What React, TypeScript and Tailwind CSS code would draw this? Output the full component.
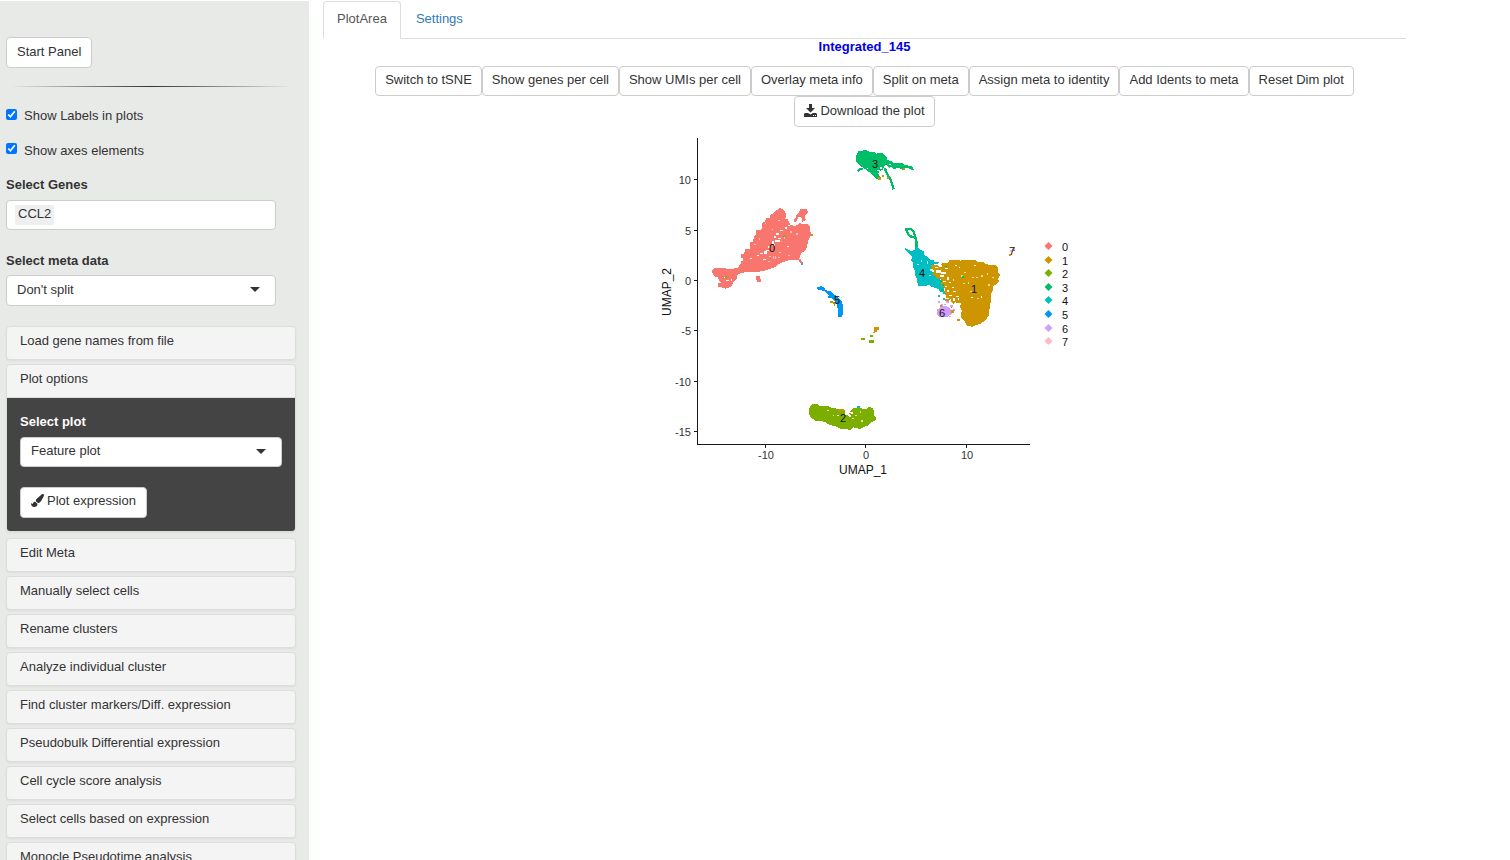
import React, { useState } from 'react';
import { FaPaintBrush } from 'react-icons/fa';

const plotButtons = [
  'Switch to tSNE',
  'Show genes per cell',
  'Show UMIs per cell',
  'Overlay meta info',
  'Split on meta',
  'Assign meta to identity',
  'Add Idents to meta',
  'Reset Dim plot',
];

const sections = [
  'Edit Meta',
  'Manually select cells',
  'Rename clusters',
  'Analyze individual cluster',
  'Find cluster markers/Diff. expression',
  'Pseudobulk Differential expression',
  'Cell cycle score analysis',
  'Select cells based on expression',
  'Monocle Pseudotime analysis',
];

const colors = ['#f8766d', '#cd9600', '#7cae00', '#00be67', '#00bfc4', '#0096f5', '#d39cff', '#ffb8c4'];
const legendY = [246, 260, 273, 287, 300, 314, 328, 341];

const yTicks = [
  { label: '10', y: 179 },
  { label: '5', y: 230 },
  { label: '0', y: 280 },
  { label: '-5', y: 330 },
  { label: '-10', y: 381 },
  { label: '-15', y: 431 },
];

const xTicks = [
  { label: '-10', x: 766 },
  { label: '0', x: 866 },
  { label: '10', x: 967 },
];

const centers = [
  { label: '0', x: 772, y: 252 },
  { label: '1', x: 974, y: 293 },
  { label: '2', x: 843, y: 422 },
  { label: '3', x: 875, y: 168 },
  { label: '4', x: 922, y: 277 },
  { label: '5', x: 837, y: 304 },
  { label: '6', x: 942, y: 317 },
  { label: '7', x: 1012, y: 255 },
];

type Box = [number, number, number, number];

function Specks({ boxes, fill }: { boxes: Box[]; fill: string }) {
  return (
    <g fill={fill}>
      {boxes.map(([x, y, w, h], i) => (
        <rect key={i} x={x} y={y} width={w} height={h} />
      ))}
    </g>
  );
}

// gaps between the cells, in thirds of a plot unit
const gaps0: Box[] = [
  [226, 90, 7, 4], [214, 99, 8, 5], [208, 108, 6, 5], [219, 114, 9, 3], [210, 119, 15, 6],
  [202, 124, 5, 7], [190, 138, 5, 6], [176, 153, 9, 8], [184, 150, 8, 4], [164, 160, 11, 3],
  [155, 164, 7, 3], [134, 174, 6, 3], [174, 176, 9, 3],
  [240, 82, 5, 4], [248, 74, 7, 4], [258, 70, 5, 3],
  [246, 138, 6, 3],
  [206, 131, 3, 6], [56, 231, 8, 3], [62, 240, 11, 3], [78, 236, 4, 7],
];
const pale0: Box[] = [
  [180, 68, 4, 4], [200, 86, 4, 3], [220, 60, 4, 3], [254, 94, 8, 5], [273, 99, 6, 5],
  [162, 114, 4, 5], [148, 132, 5, 4], [240, 106, 4, 3], [204, 168, 3, 8], [210, 168, 3, 8],
  [236, 112, 5, 4], [219, 170, 5, 4], [188, 184, 6, 3], [250, 164, 5, 3],
  [228, 122, 4, 4], [222, 156, 6, 3], [193, 169, 5, 3],
];
const gaps1: Box[] = [
  [134, 155, 10, 5], [147, 151, 9, 4], [125, 165, 8, 6], [139, 166, 13, 9], [153, 170, 16, 7],
  [166, 159, 7, 4], [150, 181, 13, 6], [170, 187, 8, 9], [159, 198, 8, 4], [176, 201, 6, 3],
  [164, 212, 8, 4], [187, 215, 6, 3], [170, 225, 8, 7], [188, 229, 9, 3], [176, 239, 10, 4],
  [198, 242, 8, 4], [166, 248, 11, 5], [188, 249, 6, 8], [204, 250, 4, 6],
  [199, 263, 8, 4], [184, 264, 6, 7], [206, 157, 5, 3],
  [196, 151, 5, 3], [252, 150, 6, 3], [243, 245, 6, 3], [274, 242, 3, 6],
];

function UmapPlot() {
  return (
    <svg viewBox="649 137 431 345" className="h-[345px] w-[431px] font-['Liberation_Sans',sans-serif]">
      <g shapeRendering="crispEdges">
        <g stroke="#1a1a1a" strokeWidth="1">
          <path d="M697.5 138V444.5H1029.5" fill="none" />
          {yTicks.map((t) => (
            <path key={t.label} d={`M694 ${t.y + 0.5}H697`} />
          ))}
          {xTicks.map((t) => (
            <path key={t.label} d={`M${t.x - 0.5} 445V448`} />
          ))}
        </g>

        {/* cluster 0 */}
        <g transform="translate(705 200) scale(0.33333)">
          <path
            fill={colors[0]}
            d="M20 212L30 203H60L66 207L80 208L92 203H99L108 189V182H114V176L108 174V163H116L122 147H134V128L143 125L149 108L154 104V91H168L172 84V68L180 65L184 54H194V45L206 39L210 33L226 24L240 33L244 48L240 56L249 58L251 66L257 76L272 77L284 70L310 73L316 84V95L319 105L312 116L308 130L306 143L299 152L291 158L286 166L282 180H266L245 182L225 190L212 200L196 207L170 214L148 216L129 215L115 218L98 222L96 236L86 246L78 260L62 266L48 262H38V249H50L42 240L38 232L27 228Z"
          />
          <path fill={colors[0]} d="M274 46L282 37L286 28H306L309 38L299 46V54L303 60L293 66L288 50L280 52L277 60L269 68L266 58L274 54Z" />
          <path fill={colors[0]} d="M152 228H164L169 247H158L153 239Z" />
          <path fill="none" stroke={colors[0]} strokeWidth="6" d="M274 172L284 180L293 193" />
          <Specks boxes={gaps0} fill="#fff" />
          <Specks boxes={pale0} fill="#fcc5b8" />
          <Specks boxes={[[60, 228, 8, 6], [234, 106, 8, 4], [319, 102, 6, 5]]} fill="#b79a1c" />
          <Specks boxes={[[287, 190, 6, 5]]} fill="#4f9fc4" />
        </g>

        {/* cluster 3 */}
        <g transform="translate(850 135) scale(0.33333)">
          <path
            fill={colors[3]}
            d="M18 62L25 49L48 45L58 51H72L80 56L90 52L102 57L109 65L112 74L124 79L134 85H158L163 91L184 92L193 105H184L176 100H164L158 105L149 99H140L132 103L126 97L116 98L110 91L103 92L98 104L88 108L84 116L92 126L90 135L78 130L69 123L62 115L48 104L36 96L24 86L18 78Z"
          />
          <path fill="none" stroke={colors[3]} strokeWidth="7" d="M104 99L112 118L122 135L131 163" />
          <path fill="none" stroke={colors[3]} strokeWidth="6" d="M22 109L28 103L38 102" />
          <Specks boxes={[[90, 96, 5, 6], [82, 104, 7, 5], [86, 113, 6, 5], [116, 86, 6, 3], [51, 98, 4, 3]]} fill="#fff" />
          <Specks boxes={[[85, 127, 9, 9], [96, 119, 6, 6], [112, 125, 6, 6], [160, 98, 6, 6]]} fill={colors[1]} />
        </g>

        {/* clusters 4, 1, 6, 7 */}
        <g transform="translate(890 215) scale(0.33333)">
          <path fill="none" stroke={colors[3]} strokeWidth="7" d="M45 42H62L71 51L77 70L80 84V104M49 44L54 56L60 64L72 67" />
          <path
            fill={colors[4]}
            d="M45 98L55 104L64 108L74 105L78 96H83L92 105L102 110V120L114 126L119 134H130L133 140H148V145L133 148L128 157L133 168L139 183L151 192L154 203L162 209V232L151 231L145 222L126 216L116 210L105 214L84 213L81 194L76 182V170L69 156V144L64 138L65 125L55 114L45 103Z"
          />
          <path
            fill={colors[1]}
            d="M124 151L140 149L145 153L160 143H174L178 135H208L212 138L218 134H256L262 140H280L288 147L298 150H315L325 160V175L330 180L324 191L327 200L316 210L308 214L310 224L303 238L304 261L299 270L298 300L286 316L274 325L256 331L248 336L231 332L224 320L214 308L212 294L218 288L210 278L213 264L194 262L188 270L182 252L172 262L163 256L169 244L160 235L166 222L152 210V198H159L150 190L142 192L137 183L128 180L131 171L124 166Z"
          />
          <Specks boxes={gaps1} fill="#fff" />
          <Specks
            boxes={[[222, 170, 5, 4], [246, 186, 5, 4], [233, 202, 4, 5], [274, 180, 4, 5], [259, 186, 5, 4], [240, 228, 5, 4], [307, 185, 6, 4], [188, 192, 4, 5], [294, 208, 6, 4], [290, 175, 5, 4], [214, 181, 6, 4], [219, 204, 6, 3], [261, 248, 5, 3]]}
            fill="#ecd9a6"
          />
          <Specks boxes={[[217, 184, 6, 5], [150, 196, 6, 5], [165, 152, 5, 5], [153, 222, 8, 6], [157, 208, 5, 5], [94, 178, 5, 5]]} fill={colors[3]} />
          <Specks boxes={[[144, 240, 6, 5], [160, 231, 6, 5], [159, 250, 5, 5]]} fill={colors[4]} />
          <Specks boxes={[[94, 135, 3, 7], [82, 148, 6, 3], [112, 138, 3, 9], [118, 180, 6, 3], [121, 162, 7, 7]]} fill="#c6f1f2" />
          <path fill={colors[6]} d="M142 284L151 276L163 273L176 276L183 284H190V294L179 300L172 307H150L141 298Z" />
          <Specks boxes={[[144, 257, 6, 7], [152, 266, 8, 6], [169, 257, 8, 6], [163, 266, 6, 5], [180, 270, 8, 6], [190, 282, 6, 6], [176, 302, 8, 5]]} fill={colors[6]} />
          <Specks boxes={[[150, 270, 6, 5], [183, 285, 8, 8], [182, 275, 5, 5], [202, 311, 7, 7]]} fill={colors[1]} />
          <Specks boxes={[[360, 106, 9, 6], [366, 98, 8, 8]]} fill={colors[7]} />
          <Specks boxes={[[356, 116, 7, 6]]} fill={colors[1]} />
          <Specks boxes={[[370, 104, 4, 5]]} fill="#8a5fc0" />
        </g>

        {/* cluster 5 */}
        <g transform="translate(650 135) scale(0.33333)">
          <path fill={colors[5]} d="M501 457L514 453L524 459L526 465L541 469L552 478L567 489L577 502L580 533L575 547H565L562 512L552 495L544 490L536 487V481L526 470L515 466H505Z" />
          <Specks boxes={[[533, 482, 6, 7]]} fill={colors[5]} />
          <Specks boxes={[[540, 498, 8, 5], [548, 502, 8, 6], [553, 491, 6, 6], [551, 507, 5, 5]]} fill="#a3a500" />
        </g>

        {/* cluster 2 */}
        <g transform="translate(650 300) scale(0.33333)">
          <path
            fill={colors[2]}
            d="M477 329L481 319L489 312H503L507 318H533L547 325L556 324L567 330H586V341L596 348L603 339L600 333L611 324L626 323L638 326H649L656 321L666 323L673 332L672 346L680 354L675 363L666 366L656 376L645 380L631 387L609 382L601 391L588 387L572 386L556 379L535 373L523 365L515 364L497 364L489 357L481 351L477 341Z"
          />
          <Specks boxes={[[590, 335, 6, 4], [584, 342, 10, 4], [598, 346, 6, 4], [603, 337, 5, 4], [562, 344, 6, 3]]} fill="#fff" />
          <Specks boxes={[[629, 333, 5, 5], [615, 344, 5, 4], [634, 360, 4, 6], [606, 354, 5, 3], [548, 346, 5, 3], [532, 330, 4, 4]]} fill="#d8e7b0" />
          <Specks boxes={[[564, 327, 18, 5], [673, 81, 15, 8], [673, 88, 9, 7], [669, 95, 7, 4], [598, 338, 5, 4]]} fill={colors[1]} />
          <Specks boxes={[[622, 318, 7, 5]]} fill={colors[4]} />
          <Specks boxes={[[634, 113, 10, 7], [660, 105, 8, 5], [657, 121, 14, 8]]} fill={colors[2]} />
        </g>
      </g>

      {colors.map((color, i) => (
        <path key={color} fill={color} d={`M1048.500 ${legendY[i] - 4}l4 4l-4 4l-4 -4z`} />
      ))}
      <g fontSize="11" fill="#111">
        {legendY.map((y, i) => (
          <text key={y} x="1062" y={y + 5}>{i}</text>
        ))}
        {centers.map((c) => (
          <text key={c.label} x={c.x} y={c.y} textAnchor="middle">{c.label}</text>
        ))}
      </g>
      <g fontSize="11" fill="#333">
        {yTicks.map((t) => (
          <text key={t.label} x="691" y={t.y + 5} textAnchor="end">{t.label}</text>
        ))}
        {xTicks.map((t) => (
          <text key={t.label} x={t.x} y="459" textAnchor="middle">{t.label}</text>
        ))}
      </g>
      <g fontSize="12" fill="#111" textAnchor="middle">
        <text x="863" y="474">UMAP_1</text>
        <text transform="translate(671 292) rotate(-90)">UMAP_2</text>
      </g>
    </svg>
  );
}

function Caret() {
  return <span className="pointer-events-none absolute right-4 top-3 border-x-[5px] border-t-[5px] border-x-transparent border-t-[#333]" />;
}

function Section({ title, children }: { title: string; children?: React.ReactNode }) {
  return (
    <div className="overflow-hidden rounded border border-[#ddd] bg-[#f4f4f4] shadow-xs">
      <button className="block h-8 w-full pb-1 pl-[13px] text-left">{title}</button>
      {children}
    </div>
  );
}

function DownloadIcon() {
  return (
    <svg viewBox="0 0 13 13" className="mr-[3px] h-[13px] w-[13px]" fill="#333">
      <path d="M5 0h3v4h3L6.500 8.500L2 4h3z" />
      <path d="M1 9h3l2.500 1.500L9 9h3l1 1v3H0v-3z" />
      <path fill="#fff" d="M9 11h1v1H9zM11 11h1v1h-1z" />
    </svg>
  );
}

function App() {
  const [labels, setLabels] = useState(true);
  const [axes, setAxes] = useState(true);

  return (
    <div className="flex h-screen overflow-hidden bg-white font-['Liberation_Sans',Arial,sans-serif] text-[13px] leading-[18px] text-[#333]">
      <aside className="mt-px w-[309px] shrink-0 overflow-hidden bg-[#e8eae7] pl-1.5 pr-[13px] pt-9">
        <button className="h-[31px] rounded border border-[#ccc] bg-white px-2.5 pb-0.5">Start Panel</button>
        <hr className="mx-1 mt-[18px] h-px border-0 bg-linear-to-r from-transparent via-[#333] to-transparent" />

        <label className="mt-5 flex items-start gap-[7px]">
          <input type="checkbox" className="mt-0.5 h-[11px] w-[11px] accent-[#0075ff]" checked={labels} onChange={() => setLabels(!labels)} />
          Show Labels in plots
        </label>
        <label className="mt-[17px] flex items-start gap-[7px]">
          <input type="checkbox" className="mt-px h-[11px] w-[11px] accent-[#0075ff]" checked={axes} onChange={() => setAxes(!axes)} />
          Show axes elements
        </label>

        <label htmlFor="genes" className="mt-4 block font-bold">Select Genes</label>
        <div className="mr-5 mt-1.5 flex h-[30px] items-start rounded border border-[#ccc] bg-white px-2 pt-1">
          <span className="h-5 rounded-xs bg-[#efefef] px-[3px]">CCL2</span>
          <input id="genes" className="h-5 min-w-0 flex-1 outline-none" />
        </div>

        <label htmlFor="meta" className="mt-[22px] block font-bold">Select meta data</label>
        <div className="relative mr-5 mt-[5px]">
          <select id="meta" className="block h-[31px] w-full appearance-none rounded border border-[#ccc] bg-white px-2.5 pb-0.5">
            <option>Don't split</option>
          </select>
          <Caret />
        </div>

        <div className="mt-5 flex flex-col gap-1">
          <Section title="Load gene names from file" />
          <Section title="Plot options">
            <div className="border-t border-[#ddd] bg-[#444] px-[13px] pb-[13px] pt-[15px]">
              <label htmlFor="plot" className="block font-bold text-white">Select plot</label>
              <div className="relative mt-1.5">
                <select id="plot" className="block h-[30px] w-full appearance-none rounded border border-[#ccc] bg-white px-2.5 pb-0.5">
                  <option>Feature plot</option>
                </select>
                <Caret />
              </div>
              <button className="mt-5 flex h-[31px] items-center rounded border border-[#ccc] bg-white px-2.5 pb-1">
                <FaPaintBrush className="mr-[3px] h-[13px] w-[13px]" />
                Plot expression
              </button>
            </div>
          </Section>
          <div className="mt-0.5 flex flex-col gap-1">
            {sections.map((title) => (
              <Section key={title} title={title} />
            ))}
          </div>
        </div>
      </aside>

      <main className="min-w-0 flex-1 pl-3.5 pr-[104px] pt-px">
        <nav className="flex h-[38px] border-b border-[#ddd]">
          <a href="#plot-area" className="h-[38px] rounded-t border border-b-white border-[#ddd] px-[13px] pt-2 text-[#555]">PlotArea</a>
          <a href="#settings" className="px-[15px] pt-[9px] text-[#337ab7]">Settings</a>
        </nav>
        <h1 className="-mt-px text-center font-bold text-[#0000e6]">Integrated_145</h1>
        <div className="mt-2.5 flex flex-wrap justify-center">
          {plotButtons.map((label) => (
            <button key={label} className="h-[30px] rounded border border-[#ccc] bg-white px-[9px] pb-0.5">{label}</button>
          ))}
        </div>
        <div className="flex justify-center">
          <button className="flex h-[31px] items-center rounded border border-[#ccc] bg-white px-[9px] pb-0.5">
            <DownloadIcon />
            Download the plot
          </button>
        </div>
        <div className="mt-2.5 flex justify-center">
          <UmapPlot />
        </div>
      </main>
    </div>
  );
}

export default App;
